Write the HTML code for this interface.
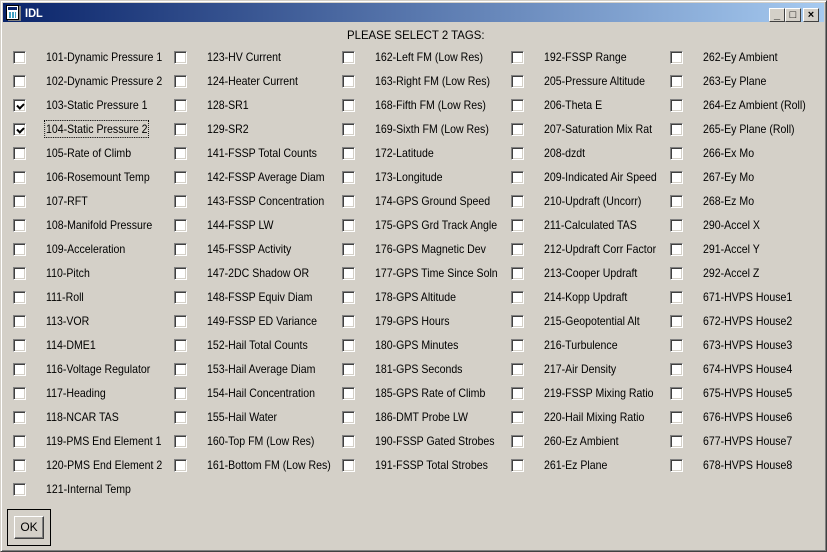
<!DOCTYPE html>
<html><head><meta charset="utf-8"><style>
*{margin:0;padding:0;box-sizing:border-box}
body{width:827px;height:552px;background:#d4d0c8;position:relative;overflow:hidden;font-family:"Liberation Sans",sans-serif;font-size:12px;color:#000}
.win{position:absolute;left:0;top:0;width:827px;height:552px;border:1px solid;border-color:#d4d0c8 #404040 #404040 #d4d0c8;box-shadow:inset 1px 1px 0 #fff,inset -1px -1px 0 #808080}
.title{position:absolute;left:3px;top:3px;width:821px;height:19px;background:linear-gradient(to right,#0a246a,#a6caf0);color:#fff;font-weight:bold;font-size:12px}
.title span{position:absolute;left:22px;top:3px;transform:scaleX(.92);transform-origin:left}
.ic{position:absolute;left:3px;top:2px;width:13px;height:15px;background:#fff;border:1px solid #000;box-shadow:2px 1px 0 #808080}
.ic::before{content:"";position:absolute;left:1px;top:1px;width:9px;height:3px;background:#0a246a}
.ic::after{content:"";position:absolute;left:2px;top:6px;width:7px;height:6px;background:repeating-linear-gradient(90deg,#40a0c0 0 2px,#fff 2px 3px)}
.tb{position:absolute;top:5px;width:16px;height:14px;background:#d4d0c8;border:1px solid;border-color:#fff #404040 #404040 #fff;color:#000;font-size:11px;text-align:center;line-height:12px;font-weight:bold}
.cb{position:absolute;width:13px;height:13px;background:#fff;border:1px solid;border-color:#808080 #fff #fff #808080;box-shadow:inset 1px 1px 0 #404040,inset -1px -1px 0 #d4d0c8}
.cb.on::after{content:"";position:absolute;left:2px;top:1px;width:5px;height:3px;border-left:2px solid #000;border-bottom:2px solid #000;transform:translate(1px,2px) rotate(-45deg)}
.lb{position:absolute;white-space:nowrap;line-height:14px;transform:scaleX(.88);transform-origin:left}
.hd{position:absolute;left:347px;top:28px;font-size:12px;transform:scaleX(.95);transform-origin:left}
.okf{position:absolute;left:7px;top:509px;width:44px;height:37px;border:1px solid #000}
.ok{position:absolute;left:6px;top:6px;width:30px;height:23px;border:1px solid;border-color:#fff #404040 #404040 #fff;box-shadow:inset -1px -1px 0 #808080;text-align:center;line-height:20px}
.focus{outline:1px dotted #000;outline-offset:1px}
</style></head><body>
<div class="win"></div>
<div class="title"><div class="ic"></div><span>IDL</span>
<div class="tb" style="left:766px">_</div><div class="tb" style="left:782px">□</div><div class="tb" style="left:800px">×</div></div>
<div class="hd">PLEASE SELECT 2 TAGS:</div>
<div id="c"></div>
<div class="okf"><div class="ok">OK</div></div>
<script>
var cols=[
["101-Dynamic Pressure 1","102-Dynamic Pressure 2","103-Static Pressure 1","104-Static Pressure 2","105-Rate of Climb","106-Rosemount Temp","107-RFT","108-Manifold Pressure","109-Acceleration","110-Pitch","111-Roll","113-VOR","114-DME1","116-Voltage Regulator","117-Heading","118-NCAR TAS","119-PMS End Element 1","120-PMS End Element 2","121-Internal Temp"],
["123-HV Current","124-Heater Current","128-SR1","129-SR2","141-FSSP Total Counts","142-FSSP Average Diam","143-FSSP Concentration","144-FSSP LW","145-FSSP Activity","147-2DC Shadow OR","148-FSSP Equiv Diam","149-FSSP ED Variance","152-Hail Total Counts","153-Hail Average Diam","154-Hail Concentration","155-Hail Water","160-Top FM (Low Res)","161-Bottom FM (Low Res)"],
["162-Left FM (Low Res)","163-Right FM (Low Res)","168-Fifth FM (Low Res)","169-Sixth FM (Low Res)","172-Latitude","173-Longitude","174-GPS Ground Speed","175-GPS Grd Track Angle","176-GPS Magnetic Dev","177-GPS Time Since Soln","178-GPS Altitude","179-GPS Hours","180-GPS Minutes","181-GPS Seconds","185-GPS Rate of Climb","186-DMT Probe LW","190-FSSP Gated Strobes","191-FSSP Total Strobes"],
["192-FSSP Range","205-Pressure Altitude","206-Theta E","207-Saturation Mix Rat","208-dzdt","209-Indicated Air Speed","210-Updraft (Uncorr)","211-Calculated TAS","212-Updraft Corr Factor","213-Cooper Updraft","214-Kopp Updraft","215-Geopotential Alt","216-Turbulence","217-Air Density","219-FSSP Mixing Ratio","220-Hail Mixing Ratio","260-Ez Ambient","261-Ez Plane"],
["262-Ey Ambient","263-Ey Plane","264-Ez Ambient (Roll)","265-Ey Plane (Roll)","266-Ex Mo","267-Ey Mo","268-Ez Mo","290-Accel X","291-Accel Y","292-Accel Z","671-HVPS House1","672-HVPS House2","673-HVPS House3","674-HVPS House4","675-HVPS House5","676-HVPS House6","677-HVPS House7","678-HVPS House8"]];
var cx=[13,174,342,511,670],tx=[46,207,375,544,703],h="";
cols.forEach(function(c,i){c.forEach(function(t,j){var y=51+24*j;var on=(i==0&&(j==2||j==3));
h+='<div class="cb'+(on?' on':'')+'" style="left:'+cx[i]+'px;top:'+y+'px"></div>';
h+='<div class="lb'+(i==0&&j==3?' focus':'')+'" style="left:'+tx[i]+'px;top:'+(y-1)+'px">'+t+'</div>';});});
document.getElementById("c").innerHTML=h;
</script>
</body></html>
